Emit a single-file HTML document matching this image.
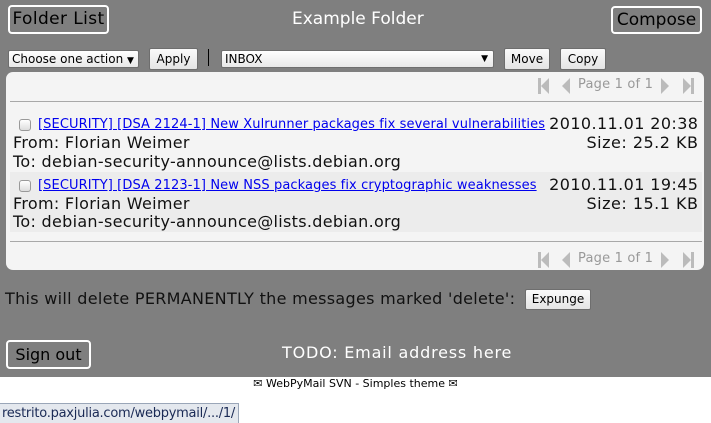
<!DOCTYPE html>
<html><head><style>
body{margin:0;width:711px;height:423px;position:relative;background:#fff;font-family:"DejaVu Sans","Liberation Sans",sans-serif;overflow:hidden}
.g{position:absolute;left:0;top:0;width:711px;height:377px;background:#7f7f7f}
.a{position:absolute;white-space:nowrap}
.box{position:absolute;border:2px solid #fff;border-radius:4px;color:#000;font-size:17px;box-sizing:border-box;text-align:center}
.btn{position:absolute;background:linear-gradient(#fafafa,#e4e4e4);border:1px solid #6e6e6e;border-radius:2px;font-size:12px;box-sizing:border-box;text-align:center;color:#000}
.sel{position:absolute;background:linear-gradient(#fff,#e8e8e8);border:1px solid #6e6e6e;border-radius:2px;font-size:12px;box-sizing:border-box;padding-left:3px;color:#000}
.panel{position:absolute;left:6px;top:72px;width:698px;height:198px;background:#f4f4f4;border-radius:7px}
.hr{position:absolute;left:10px;width:692px;height:1px;background:#a8a8a8}
.pg{position:absolute;left:578px;font-size:13px;color:#999;white-space:nowrap;letter-spacing:0.2px}
.cb{position:absolute;width:10px;height:10px;border:1px solid #999;border-radius:3px;background:linear-gradient(#fff,#ddd)}
.lnk{position:absolute;font-size:13px;color:#00e;text-decoration:underline;white-space:nowrap;letter-spacing:0.1px}
.t{position:absolute;font-size:16px;color:#111;white-space:nowrap;letter-spacing:0.3px}
.d{letter-spacing:0.4px;margin-right:-0.4px}
.s{letter-spacing:0.5px;margin-right:-0.5px}
</style></head><body>
<div class="g"></div>
<div class="box" style="left:8px;top:5px;width:101px;height:29px;line-height:25px;letter-spacing:0.4px">Folder List</div>
<div class="a" style="left:292px;top:9px;color:#fff;font-size:17px">Example Folder</div>
<div class="box" style="left:611px;top:6px;width:91px;height:28px;line-height:24px">Compose</div>

<div class="sel" style="left:8px;top:50px;width:131px;height:18px;line-height:16px">Choose one action <span style="font-size:9px">▼</span></div>
<div class="btn" style="left:149px;top:48px;width:49px;height:22px;line-height:20px">Apply</div>
<div class="a" style="left:208px;top:49px;width:1px;height:17px;background:#000"></div>
<div class="sel" style="left:221px;top:50px;width:273px;height:18px;line-height:16px">INBOX<span style="position:absolute;right:5px;font-size:9px">▼</span></div>
<div class="btn" style="left:504px;top:48px;width:46px;height:22px;line-height:20px">Move</div>
<div class="btn" style="left:560px;top:48px;width:46px;height:22px;line-height:20px">Copy</div>

<div class="panel"></div>
<svg class="a" style="left:536px;top:77px" width="160" height="18"><g fill="#bbb"><rect x="2" y="1" width="3" height="16"/><path d="M13 1L5 9L13 17Z"/><path d="M34 1L26 9L34 17Z"/><path d="M125 1L133 9L125 17Z"/><path d="M147 1L155 9L147 17Z"/><rect x="155" y="1" width="3" height="16"/></g></svg>
<div class="pg" style="top:77px">Page 1 of 1</div>
<div class="hr" style="top:101px"></div>
<div class="a" style="left:10px;top:172px;width:692px;height:60px;background:#ececec"></div>

<div class="cb" style="left:19px;top:119px"></div>
<div class="lnk" style="left:38px;top:117px">[SECURITY] [DSA 2124-1] New Xulrunner packages fix several vulnerabilities</div>
<div class="t" style="left:13px;top:133px">From: Florian Weimer</div>
<div class="t" style="left:13px;top:152px">To: debian-security-announce@lists.debian.org</div>
<div class="t d" style="right:13px;top:114px">2010.11.01 20:38</div>
<div class="t s" style="right:13px;top:133px">Size: 25.2 KB</div>

<div class="cb" style="left:19px;top:180px"></div>
<div class="lnk" style="left:38px;top:178px">[SECURITY] [DSA 2123-1] New NSS packages fix cryptographic weaknesses</div>
<div class="t" style="left:13px;top:194px">From: Florian Weimer</div>
<div class="t" style="left:13px;top:212px">To: debian-security-announce@lists.debian.org</div>
<div class="t d" style="right:13px;top:175px">2010.11.01 19:45</div>
<div class="t s" style="right:13px;top:194px">Size: 15.1 KB</div>

<div class="hr" style="top:241px"></div>
<svg class="a" style="left:536px;top:251px" width="160" height="18"><g fill="#bbb"><rect x="2" y="1" width="3" height="16"/><path d="M13 1L5 9L13 17Z"/><path d="M34 1L26 9L34 17Z"/><path d="M125 1L133 9L125 17Z"/><path d="M147 1L155 9L147 17Z"/><rect x="155" y="1" width="3" height="16"/></g></svg>
<div class="pg" style="top:251px">Page 1 of 1</div>

<div class="a" style="left:5px;top:289px;font-size:16px;color:#111;letter-spacing:0.3px">This will delete PERMANENTLY the messages marked 'delete':</div>
<div class="btn" style="left:525px;top:289px;width:66px;height:21px;line-height:19px">Expunge</div>

<div class="box" style="left:6px;top:340px;width:85px;height:29px;line-height:25px;font-size:16px">Sign out</div>
<div class="a" style="left:282px;top:343px;color:#fff;font-size:16px;letter-spacing:0.8px">TODO: Email address here</div>

<div class="a" style="left:0;width:711px;text-align:center;top:377px;font-size:11px;color:#000">✉ WebPyMail SVN - Simples theme ✉</div>
<div class="a" style="left:0;top:403px;height:20px;width:239px;background:#e4e8ee;border:1px solid #9aa6b8;border-left:0;border-bottom:0;box-sizing:border-box;font-size:13px;color:#1a2a55;padding:2px 0 0 2px;letter-spacing:-0.25px">restrito.paxjulia.com/webpymail/.../1/</div>
</body></html>
